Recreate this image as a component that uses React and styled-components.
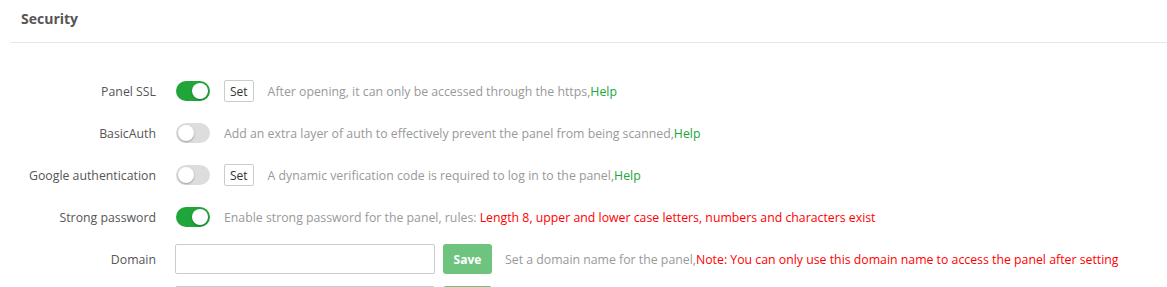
import React, { useState } from "react";
import styled, { createGlobalStyle } from "styled-components";

const GlobalStyle = createGlobalStyle`
  body {
    margin: 0;
    background: #fff;
    font-family: "Open Sans", "Liberation Sans", sans-serif;
    font-size: 12.3px;
    color: #555;
  }
`;

const rows = [
  {
    label: "Panel SSL",
    kind: "switch",
    on: true,
    set: true,
    desc: "After opening, it can only be accessed through the https,",
    help: true,
  },
  {
    label: "BasicAuth",
    kind: "switch",
    on: false,
    desc: "Add an extra layer of auth to effectively prevent the panel from being scanned,",
    help: true,
  },
  {
    label: "Google authentication",
    kind: "switch",
    on: false,
    set: true,
    desc: "A dynamic verification code is required to log in to the panel,",
    help: true,
  },
  {
    label: "Strong password",
    kind: "switch",
    on: true,
    desc: "Enable strong password for the panel, rules: ",
    warn: "Length 8, upper and lower case letters, numbers and characters exist",
  },
  {
    label: "Domain",
    kind: "input",
    save: "Save",
    desc: "Set a domain name for the panel,",
    warn: "Note: You can only use this domain name to access the panel after setting",
  },
  // next row only peeks in at the bottom edge
  {
    label: "",
    kind: "input",
    save: "",
    desc: "",
  },
];

function Row({ row }) {
  const [on, setOn] = useState(!!row.on);
  return (
    <FormRow>
      <Label>{row.label}</Label>
      {row.kind === "switch" ? (
        <Switch $on={on} onClick={() => setOn(!on)}>
          <Knob $on={on} />
        </Switch>
      ) : (
        <>
          <TextInput type="text" />
          <SaveBtn>{row.save}</SaveBtn>
        </>
      )}
      {row.set && <SetBtn>Set</SetBtn>}
      {row.desc && (
        <Desc $wide={row.kind === "input"}>
          {row.desc}
          {row.warn && <Warn>{row.warn}</Warn>}
          {row.help && <HelpLink>Help</HelpLink>}
        </Desc>
      )}
    </FormRow>
  );
}

export default function App() {
  return (
    <>
      <GlobalStyle />
      <Panel>
        <Title>Security</Title>
        <Form>
          {rows.map((r, i) => (
            <Row key={i} row={r} />
          ))}
        </Form>
      </Panel>
    </>
  );
}

const Panel = styled.div`
  padding-left: 11px;
  height: 287px;
  overflow: hidden;
`;

const Title = styled.div`
  height: 42px;
  line-height: 38px;
  padding-left: 10px;
  border-bottom: 1px solid #e6e6e6;
  font-size: 14px;
  font-weight: 700;
  color: #555;
`;

const Form = styled.div`
  padding-top: 27px;
  margin-left: -11px;
`;

const FormRow = styled.div`
  display: flex;
  align-items: center;
  height: 42px;
`;

const Label = styled.div`
  box-sizing: border-box;
  width: 176px;
  padding-right: 20px;
  text-align: right;
  color: #555;
  white-space: nowrap;
  flex-shrink: 0;
`;

const Switch = styled.div`
  position: relative;
  width: 34px;
  height: 20px;
  border-radius: 10px;
  background: ${(p) => (p.$on ? "#20a53a" : "#ddd")};
  cursor: pointer;
  flex-shrink: 0;
`;

const Knob = styled.span`
  position: absolute;
  top: 2px;
  left: ${(p) => (p.$on ? "16px" : "2px")};
  width: 16px;
  height: 16px;
  border-radius: 50%;
  background: #fff;
  box-shadow: 0 1px 2px rgba(0, 0, 0, 0.3);
`;

const SetBtn = styled.button`
  margin-left: 14px;
  height: 22px;
  padding: 0 5px;
  border: 1px solid #ccc;
  border-radius: 2px;
  background: #fff;
  color: #333;
  font-family: inherit;
  font-size: 12px;
`;

const TextInput = styled.input`
  box-sizing: border-box;
  width: 260px;
  height: 30px;
  margin-left: -1px;
  border: 1px solid #ccc;
  border-radius: 2px;
  outline: none;
`;

const SaveBtn = styled.button`
  margin-left: 8px;
  width: 49px;
  height: 30px;
  border: none;
  border-radius: 3px;
  background: #6ec47f;
  color: #fff;
  font-family: inherit;
  font-size: 12px;
  font-weight: 700;
`;

const Desc = styled.span`
  margin-left: ${(p) => (p.$wide ? "13px" : "14px")};
  color: #999;
  white-space: nowrap;
`;

const Warn = styled.span`
  color: #f00;
`;

const HelpLink = styled.a`
  color: #20a53a;
  cursor: pointer;
`;
